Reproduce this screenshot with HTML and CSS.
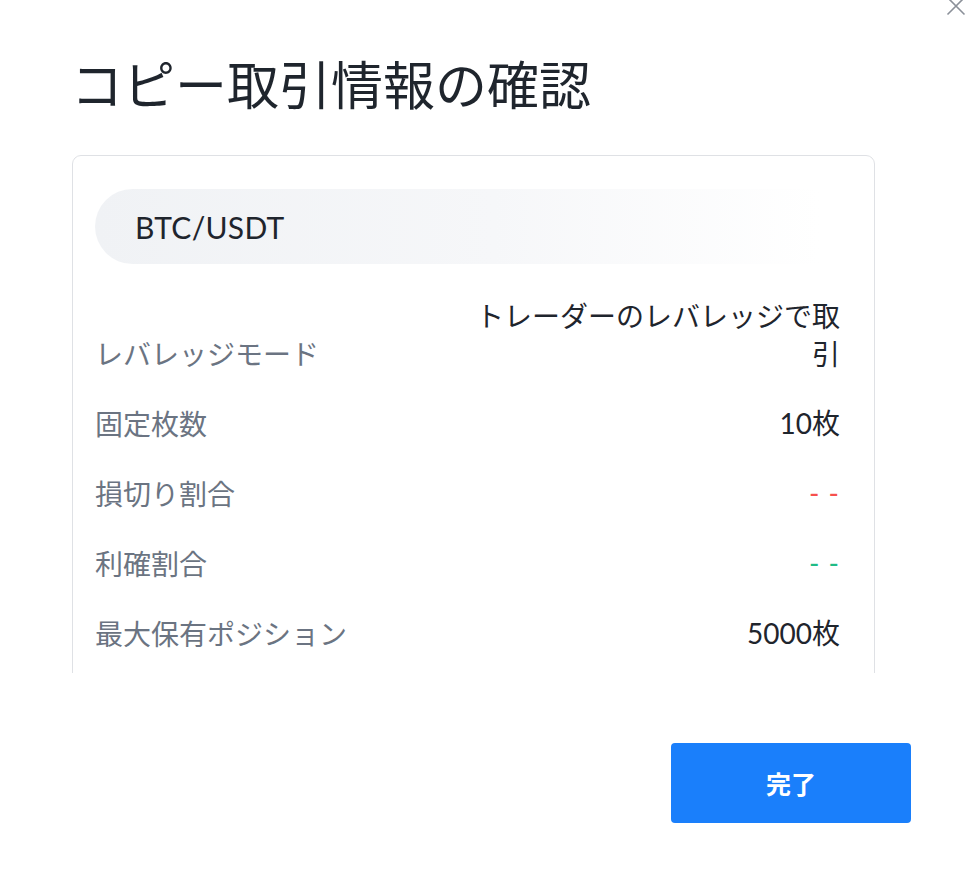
FILE: index.html
```html
<!DOCTYPE html>
<html lang="ja">
<head>
<meta charset="utf-8">
<title>コピー取引情報の確認</title>
<link rel="stylesheet" href="styles.css">
</head>
<body>
<div class="dialog">
  <button class="close" aria-label="閉じる">
    <svg width="20" height="20" viewBox="0 0 20 20"><path d="M1.5 1.5 L18.5 18.5 M18.5 1.5 L1.5 18.5" stroke="#8b9099" stroke-width="1.6" fill="none"/></svg>
  </button>
  <h1 class="title">コピー取引情報の確認</h1>
  <div class="content">
    <div class="card">
      <div class="pair">BTC/USDT</div>
      <div class="row">
        <span class="label">レバレッジモード</span>
        <span class="value wrap">トレーダーのレバレッジで取引</span>
      </div>
      <div class="row">
        <span class="label">固定枚数</span>
        <span class="value">10枚</span>
      </div>
      <div class="row">
        <span class="label">損切り割合</span>
        <span class="value red">- -</span>
      </div>
      <div class="row">
        <span class="label">利確割合</span>
        <span class="value green">- -</span>
      </div>
      <div class="row">
        <span class="label">最大保有ポジション</span>
        <span class="value">5000枚</span>
      </div>
    </div>
  </div>
  <div class="footer">
    <button class="done">完了</button>
  </div>
</div>
</body>
</html>
```
FILE: styles.css
```css
html, body {
  margin: 0;
  padding: 0;
  background: #ffffff;
}
body {
  font-family: Lato, "Noto Sans CJK JP", sans-serif;
  color: #1f252d;
  width: 978px;
  height: 875px;
  overflow: hidden;
}
.dialog {
  position: relative;
  width: 978px;
  height: 875px;
  padding-top: 57px;
  box-sizing: border-box;
}
.close {
  position: absolute;
  left: 946px;
  top: -4px;
  width: 20px;
  height: 20px;
  padding: 0;
  border: 0;
  background: transparent;
}
.close svg { display: block; }
.title {
  margin: 0 0 0 71px;
  font-family: "Noto Sans CJK JP", sans-serif;
  font-size: 52px;
  line-height: 52px;
  font-weight: 400;
  color: #1f252d;
}
.content {
  margin: 46px 0 0 72px;
  width: 803px;
  height: 518px;
  overflow: hidden;
}
.card {
  border: 1px solid #dfe1e5;
  border-radius: 9px;
  padding: 33px 34px 40px 22px;
}
.pair {
  height: 75px;
  margin-right: 20px;
  border-radius: 38px 0 0 38px;
  background: linear-gradient(to right, #f0f2f5 0%, #f6f7f9 55%, #ffffff 100%);
  display: flex;
  align-items: center;
  padding-left: 40px;
  font-size: 30px;
  letter-spacing: 0.3px;
  color: #1f252d;
  margin-bottom: 16px;
}
.row {
  display: flex;
  justify-content: space-between;
  align-items: flex-end;
  padding: 16px 0;
  line-height: 38px;
  font-size: 28px;
}
.label {
  color: #6b7482;
  font-family: "Noto Sans CJK JP", sans-serif;
  font-size: 28px;
}
.value {
  text-align: right;
  color: #1f252d;
}
.value.wrap {
  max-width: 380px;
  font-family: "Noto Sans CJK JP", sans-serif;
  font-size: 28px;
}
.red { color: #f6504d; letter-spacing: 1px; }
.green { color: #20bb86; letter-spacing: 1px; }
.footer {
  display: flex;
  justify-content: flex-end;
  padding-right: 67px;
  margin-top: 70px;
}
.done {
  width: 240px;
  height: 80px;
  border: 0;
  border-radius: 4px;
  background: #1a7ffb;
  color: #ffffff;
  font-family: "Noto Sans CJK JP", sans-serif;
  font-weight: 700;
  font-size: 25px;
}
```
